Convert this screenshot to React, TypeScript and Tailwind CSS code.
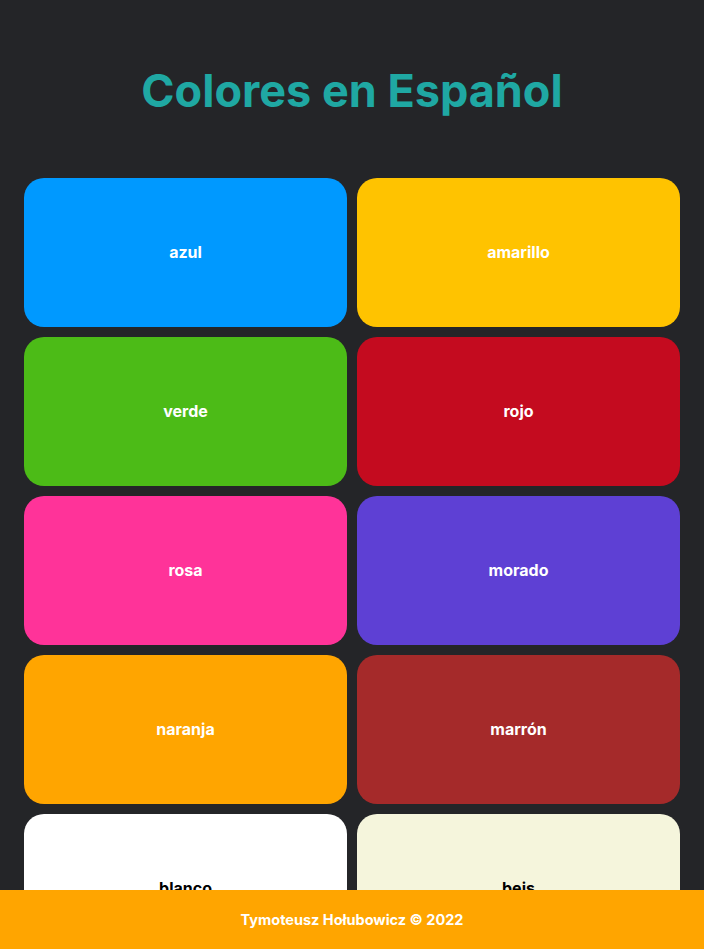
import React from 'react';

const COLORS = [
  { name: 'azul', bg: 'bg-[#0099ff]', text: 'text-white' },
  { name: 'amarillo', bg: 'bg-[#ffc300]', text: 'text-white' },
  { name: 'verde', bg: 'bg-[#4cbb17]', text: 'text-white' },
  { name: 'rojo', bg: 'bg-[#c40b1f]', text: 'text-white' },
  { name: 'rosa', bg: 'bg-[#ff3399]', text: 'text-white' },
  { name: 'morado', bg: 'bg-[#5e40d4]', text: 'text-white' },
  { name: 'naranja', bg: 'bg-[#ffa500]', text: 'text-white' },
  { name: 'marrón', bg: 'bg-[#a52a2a]', text: 'text-white' },
  { name: 'blanco', bg: 'bg-white', text: 'text-black' },
  { name: 'beis', bg: 'bg-[#f5f5dc]', text: 'text-black' }
];

const ColorCard = ({ name, bg, text }: { name: string; bg: string; text: string }) => (
  <div className={`flex h-[149px] items-center justify-center rounded-[20px] pb-[2px] ${bg}`}>
    <span className={`text-base font-bold ${text}`}>{name}</span>
  </div>
);

const App = () => {
  return (
    <div className="min-h-screen bg-[#242528] font-['Inter','Noto_Sans',sans-serif] pb-[80px]">
      <h1 className="pt-[67px] text-center text-[45px] leading-[48px] font-bold text-[#1fa8a3]">
        Colores en Español
      </h1>

      <div className="mt-[63px] grid grid-cols-2 gap-[10px] px-6">
        {COLORS.map((c) => (
          <ColorCard key={c.name} {...c} />
        ))}
      </div>

      <footer className="fixed bottom-0 left-0 flex h-[59px] w-full items-center justify-center bg-[#ffa500] text-[14.5px] font-bold text-white">
        Tymoteusz Hołubowicz © 2022
      </footer>
    </div>
  );
};

export default App;
